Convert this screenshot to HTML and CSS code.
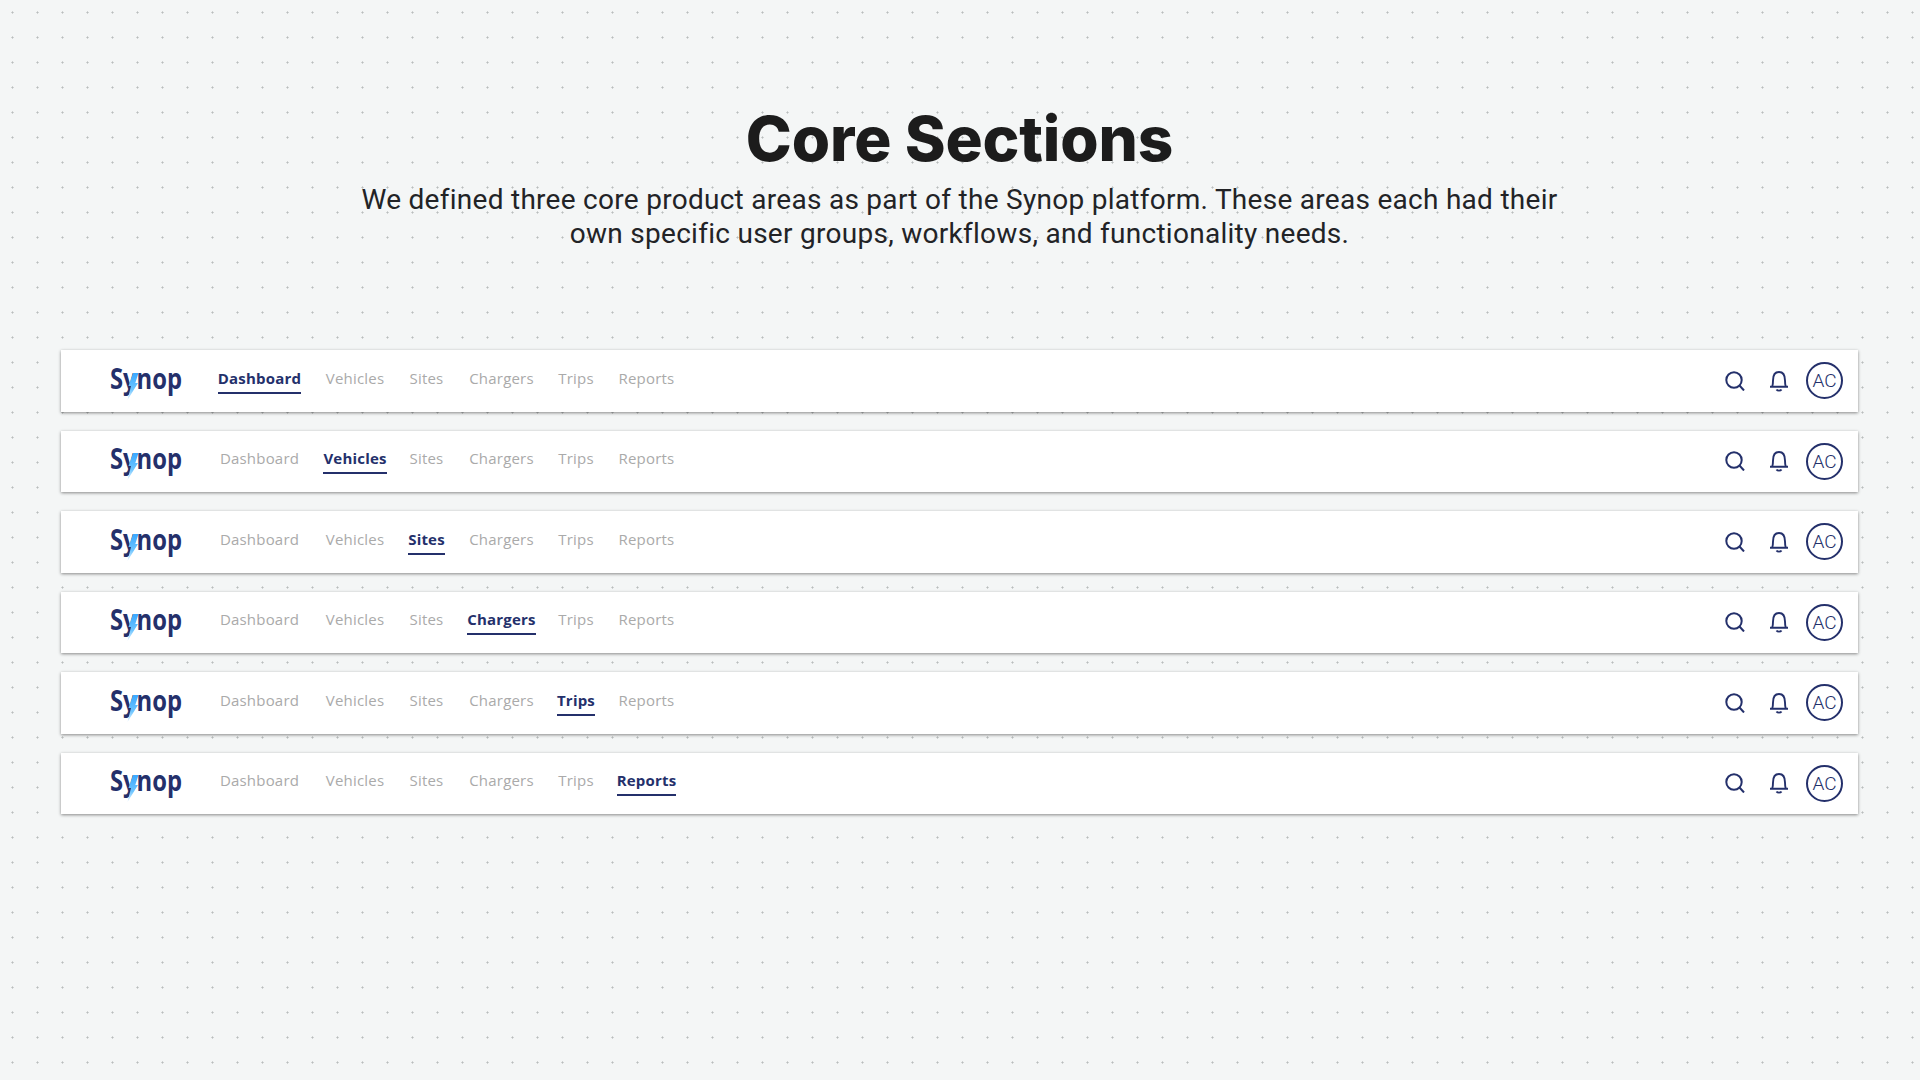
FILE: index.html
```html
<!DOCTYPE html>
<html lang="en">
<head>
<meta charset="utf-8">
<title>Core Sections</title>
<link rel="stylesheet" href="styles.css">
</head>
<body>
<svg class="backdrop" width="1920" height="1080" aria-hidden="true">
  <defs>
    <pattern id="dots" width="25" height="25" patternUnits="userSpaceOnUse">
      <rect x="11" y="12" width="3" height="1" fill="#d0d3d3"/>
      <rect x="12" y="11" width="1" height="3" fill="#d0d3d3"/>
      <rect x="12" y="12" width="1" height="1" fill="#b9bdbd"/>
    </pattern>
    <linearGradient id="bolt-fill" x1="0" y1="0" x2="0" y2="1">
      <stop offset="0" stop-color="#3aa8ff"/>
      <stop offset="0.6" stop-color="#6cc4ff"/>
      <stop offset="1" stop-color="#e6f5ff"/>
    </linearGradient>
    <symbol id="bolt" viewBox="0 0 12 27"><path d="M6 0H11.500L8.300 10H11L0.500 27L4 13H1.500Z" fill="url(#bolt-fill)"/></symbol>
    <symbol id="search" viewBox="0 0 20 20"><circle cx="9" cy="9" r="7.700" fill="none" stroke="#24306b" stroke-width="2"/><path d="M14.500 14.500L19 19.500" fill="none" stroke="#24306b" stroke-width="2"/></symbol>
    <symbol id="bell" viewBox="0 0 20 22"><path d="M1 16.800H19M3.200 16.800C3.800 15 4 13.500 4 10.500C4 5 6 2 10 2C14 2 16 5 16 10.500C16 13.500 16.200 15 16.800 16.800" fill="none" stroke="#24306b" stroke-width="1.900"/><path d="M7.500 19.500C8.500 21 11.500 21 12.500 19.500" fill="none" stroke="#24306b" stroke-width="1.900"/></symbol>
  </defs>
  <rect width="1920" height="1080" fill="url(#dots)"/>
</svg>
<main class="page">
  <header class="intro">
    <h1 class="title">Core Sections</h1>
    <p class="lead">We defined three core product areas as part of the Synop platform. These areas each had their<br>own specific user groups, workflows, and functionality needs.</p>
  </header>
  <section class="bars">
    <div class="bar">
      <div class="logo"><span class="logo-text">Synop</span><svg class="logo-bolt"><use href="#bolt"/></svg></div>
      <nav class="nav">
        <a class="item w-dashboard"><span class="label active">Dashboard</span></a>
        <a class="item w-vehicles"><span class="label">Vehicles</span></a>
        <a class="item w-sites"><span class="label">Sites</span></a>
        <a class="item w-chargers"><span class="label">Chargers</span></a>
        <a class="item w-trips"><span class="label">Trips</span></a>
        <a class="item w-reports"><span class="label">Reports</span></a>
      </nav>
      <div class="tools"><svg class="ico-search"><use href="#search"/></svg><svg class="ico-bell"><use href="#bell"/></svg><div class="avatar">AC</div></div>
    </div>
    <div class="bar">
      <div class="logo"><span class="logo-text">Synop</span><svg class="logo-bolt"><use href="#bolt"/></svg></div>
      <nav class="nav">
        <a class="item w-dashboard"><span class="label">Dashboard</span></a>
        <a class="item w-vehicles"><span class="label active">Vehicles</span></a>
        <a class="item w-sites"><span class="label">Sites</span></a>
        <a class="item w-chargers"><span class="label">Chargers</span></a>
        <a class="item w-trips"><span class="label">Trips</span></a>
        <a class="item w-reports"><span class="label">Reports</span></a>
      </nav>
      <div class="tools"><svg class="ico-search"><use href="#search"/></svg><svg class="ico-bell"><use href="#bell"/></svg><div class="avatar">AC</div></div>
    </div>
    <div class="bar">
      <div class="logo"><span class="logo-text">Synop</span><svg class="logo-bolt"><use href="#bolt"/></svg></div>
      <nav class="nav">
        <a class="item w-dashboard"><span class="label">Dashboard</span></a>
        <a class="item w-vehicles"><span class="label">Vehicles</span></a>
        <a class="item w-sites"><span class="label active">Sites</span></a>
        <a class="item w-chargers"><span class="label">Chargers</span></a>
        <a class="item w-trips"><span class="label">Trips</span></a>
        <a class="item w-reports"><span class="label">Reports</span></a>
      </nav>
      <div class="tools"><svg class="ico-search"><use href="#search"/></svg><svg class="ico-bell"><use href="#bell"/></svg><div class="avatar">AC</div></div>
    </div>
    <div class="bar">
      <div class="logo"><span class="logo-text">Synop</span><svg class="logo-bolt"><use href="#bolt"/></svg></div>
      <nav class="nav">
        <a class="item w-dashboard"><span class="label">Dashboard</span></a>
        <a class="item w-vehicles"><span class="label">Vehicles</span></a>
        <a class="item w-sites"><span class="label">Sites</span></a>
        <a class="item w-chargers"><span class="label active">Chargers</span></a>
        <a class="item w-trips"><span class="label">Trips</span></a>
        <a class="item w-reports"><span class="label">Reports</span></a>
      </nav>
      <div class="tools"><svg class="ico-search"><use href="#search"/></svg><svg class="ico-bell"><use href="#bell"/></svg><div class="avatar">AC</div></div>
    </div>
    <div class="bar">
      <div class="logo"><span class="logo-text">Synop</span><svg class="logo-bolt"><use href="#bolt"/></svg></div>
      <nav class="nav">
        <a class="item w-dashboard"><span class="label">Dashboard</span></a>
        <a class="item w-vehicles"><span class="label">Vehicles</span></a>
        <a class="item w-sites"><span class="label">Sites</span></a>
        <a class="item w-chargers"><span class="label">Chargers</span></a>
        <a class="item w-trips"><span class="label active">Trips</span></a>
        <a class="item w-reports"><span class="label">Reports</span></a>
      </nav>
      <div class="tools"><svg class="ico-search"><use href="#search"/></svg><svg class="ico-bell"><use href="#bell"/></svg><div class="avatar">AC</div></div>
    </div>
    <div class="bar">
      <div class="logo"><span class="logo-text">Synop</span><svg class="logo-bolt"><use href="#bolt"/></svg></div>
      <nav class="nav">
        <a class="item w-dashboard"><span class="label">Dashboard</span></a>
        <a class="item w-vehicles"><span class="label">Vehicles</span></a>
        <a class="item w-sites"><span class="label">Sites</span></a>
        <a class="item w-chargers"><span class="label">Chargers</span></a>
        <a class="item w-trips"><span class="label">Trips</span></a>
        <a class="item w-reports"><span class="label active">Reports</span></a>
      </nav>
      <div class="tools"><svg class="ico-search"><use href="#search"/></svg><svg class="ico-bell"><use href="#bell"/></svg><div class="avatar">AC</div></div>
    </div>
  </section>
</main>
</body>
</html>
```
FILE: styles.css
```css
* { box-sizing: border-box; }
html, body { margin: 0; height: 100%; }
body {
  position: relative;
  background: #f4f6f6;
  overflow: hidden;
}
.backdrop { position: absolute; inset: 0; }
.page {
  position: relative;
  min-height: 1080px;
  padding: 104px 62px 0 61px;
}
.intro { text-align: center; }
.title {
  margin: 0;
  font: 800 62px/70px Inter, "Liberation Sans", sans-serif;
  letter-spacing: -0.15px;
  color: #1c1c1c;
}
.lead {
  margin: 9px 0 0;
  font: 400 28px/34px Roboto, "Liberation Sans", sans-serif;
  letter-spacing: 0.28px;
  color: #222326;
}
.bars {
  display: flex;
  flex-direction: column;
  gap: 19px;
  margin-top: 99px;
}
.bar {
  display: flex;
  align-items: center;
  height: 61.500px;
  padding: 0 15px 0 50px;
  background: #fff;
  box-shadow: 0 1px 3px rgba(0, 0, 0, 0.45);
}
.logo { position: relative; width: 71px; height: 30px; flex: none; }
.logo-text {
  display: block;
  margin-left: -1px;
  font: 700 29px/30px "Open Sans", sans-serif;
  color: #24306b;
  transform: translateY(-3px) scaleX(0.82);
  transform-origin: left center;
}
.logo-bolt { position: absolute; left: 16px; top: 7px; width: 12px; height: 27px; }
.nav {
  display: flex;
  gap: 25px;
  margin-left: 36px;
}
.item { display: flex; justify-content: center; flex: none; }
.label {
  flex: none;
  padding-bottom: 4px;
  border-bottom: 2px solid transparent;
  font: 400 15px/20px "Open Sans", sans-serif;
  letter-spacing: 0.2px;
  color: #aaaaaa;
  white-space: nowrap;
}
.label.active { font-weight: 700; color: #24306b; border-bottom-color: #24306b; }
.w-dashboard { width: 83px; }
.w-vehicles { width: 58px; }
.w-sites { width: 35px; }
.w-chargers { width: 65px; }
.w-trips { width: 34px; }
.w-reports { width: 57px; }
.tools { display: flex; align-items: center; margin-left: auto; }
.ico-search { width: 20px; height: 20px; }
.ico-bell { width: 20px; height: 22px; margin-left: 24px; }
.avatar {
  display: flex;
  align-items: center;
  justify-content: center;
  width: 37px;
  height: 37px;
  margin-left: 17px;
  border: 2px solid #24306b;
  border-radius: 50%;
  font: 300 19px/1 Roboto, sans-serif;
  color: #24306b;
}
```
